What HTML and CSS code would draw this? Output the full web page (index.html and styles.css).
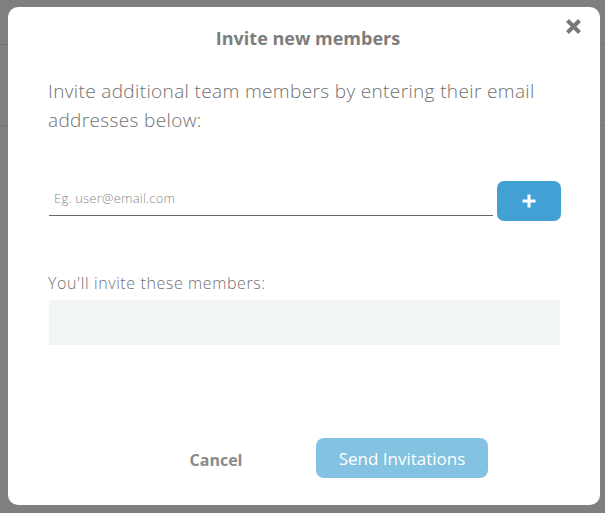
FILE: index.html
```html
<!DOCTYPE html>
<html lang="en">
<head>
<meta charset="utf-8">
<title>Invite new members</title>
<link rel="stylesheet" href="styles.css">
</head>
<body>
<div class="modal">
  <button class="close" aria-label="Close">
    <svg width="17" height="17" viewBox="0 0 17 17"><path d="M2.5 2.5 L14.5 14.5 M14.5 2.5 L2.5 14.5" stroke="#787878" stroke-width="4" stroke-linecap="butt"/></svg>
  </button>
  <h2 class="title">Invite new members</h2>
  <p class="intro">Invite additional team members by entering their email addresses below:</p>
  <div class="add-row">
    <input class="email" type="text" placeholder="Eg. user@email.com">
    <button class="add" aria-label="Add">
      <svg width="16" height="16" viewBox="0 0 16 16"><path d="M8 1.5 V14.5 M1.5 8 H14.5" stroke="#fff" stroke-width="3"/></svg>
    </button>
  </div>
  <div class="label">You'll invite these members:</div>
  <div class="members"></div>
  <div class="footer">
    <button class="cancel">Cancel</button>
    <button class="send">Send Invitations</button>
  </div>
</div>
</body>
</html>
```

FILE: styles.css
```css
html, body {
  margin: 0;
  padding: 0;
}
body {
  width: 605px;
  height: 513px;
  overflow: hidden;
  background-color: #7f7f7f;
  background-image:
    linear-gradient(to bottom, transparent 44px, #747474 44px, #747474 45px, transparent 45px),
    linear-gradient(to bottom, transparent 125px, #747474 125px, #747474 126px, transparent 126px);
  font-family: "Open Sans", "Lato", sans-serif;
  padding-top: 7px;
  box-sizing: border-box;
}
.modal {
  position: relative;
  margin-left: 8px;
  width: 592px;
  height: 498px;
  background: #fff;
  border-radius: 10px;
  box-sizing: border-box;
  padding: 20px 40px 0 40px;
}
.close {
  position: absolute;
  top: 11px;
  right: 18px;
  width: 17px;
  height: 17px;
  padding: 0;
  border: 0;
  background: none;
  display: block;
}
.close svg { display: block; }
.title {
  margin: 0;
  font-size: 18px;
  line-height: 22px;
  font-weight: 700;
  color: #7d7d7d;
  text-align: center;
  padding-left: 8px;
}
.intro {
  margin: 28px 0 0 0;
  font-size: 19px;
  line-height: 29px;
  font-weight: 300;
  letter-spacing: 0.36px;
  color: #6f6f6f;
  padding-right: 10px;
}
.add-row {
  display: flex;
  align-items: flex-start;
  gap: 4px;
  margin-top: 46px;
}
.email {
  flex: 1;
  height: 35px;
  box-sizing: border-box;
  border: 0;
  border-bottom: 1px solid #666;
  padding: 0 0 0 5px;
  margin-left: 1px;
  font-family: inherit;
  font-size: 13px;
  font-weight: 300;
  letter-spacing: 0.2px;
  color: #555;
  outline: none;
  background: transparent;
}
.email::placeholder { color: #8a8a8a; }
.add {
  width: 64px;
  height: 40px;
  border: 0;
  border-radius: 7px;
  background: #42a0d4;
  display: flex;
  align-items: center;
  justify-content: center;
  padding: 0;
  margin-right: -1px;
}
.label {
  margin-top: 52px;
  font-size: 16px;
  line-height: 20px;
  font-weight: 300;
  letter-spacing: 0.6px;
  color: #707070;
}
.members {
  margin: 7px 0 0 1px;
  height: 45px;
  background: #f2f5f6;
}
.footer {
  display: flex;
  align-items: center;
  gap: 50px;
  margin-top: 93px;
  padding-left: 118px;
}
.cancel {
  width: 100px;
  height: 40px;
  border: 0;
  background: none;
  font-family: inherit;
  font-size: 16px;
  font-weight: 700;
  color: #8a8a8a;
  padding: 4px 0 0 0;
}
.send {
  width: 172px;
  height: 40px;
  border: 0;
  border-radius: 8px;
  background: #84c2e1;
  color: #fff;
  font-family: inherit;
  font-size: 17px;
  font-weight: 400;
  padding: 0;
}
```
